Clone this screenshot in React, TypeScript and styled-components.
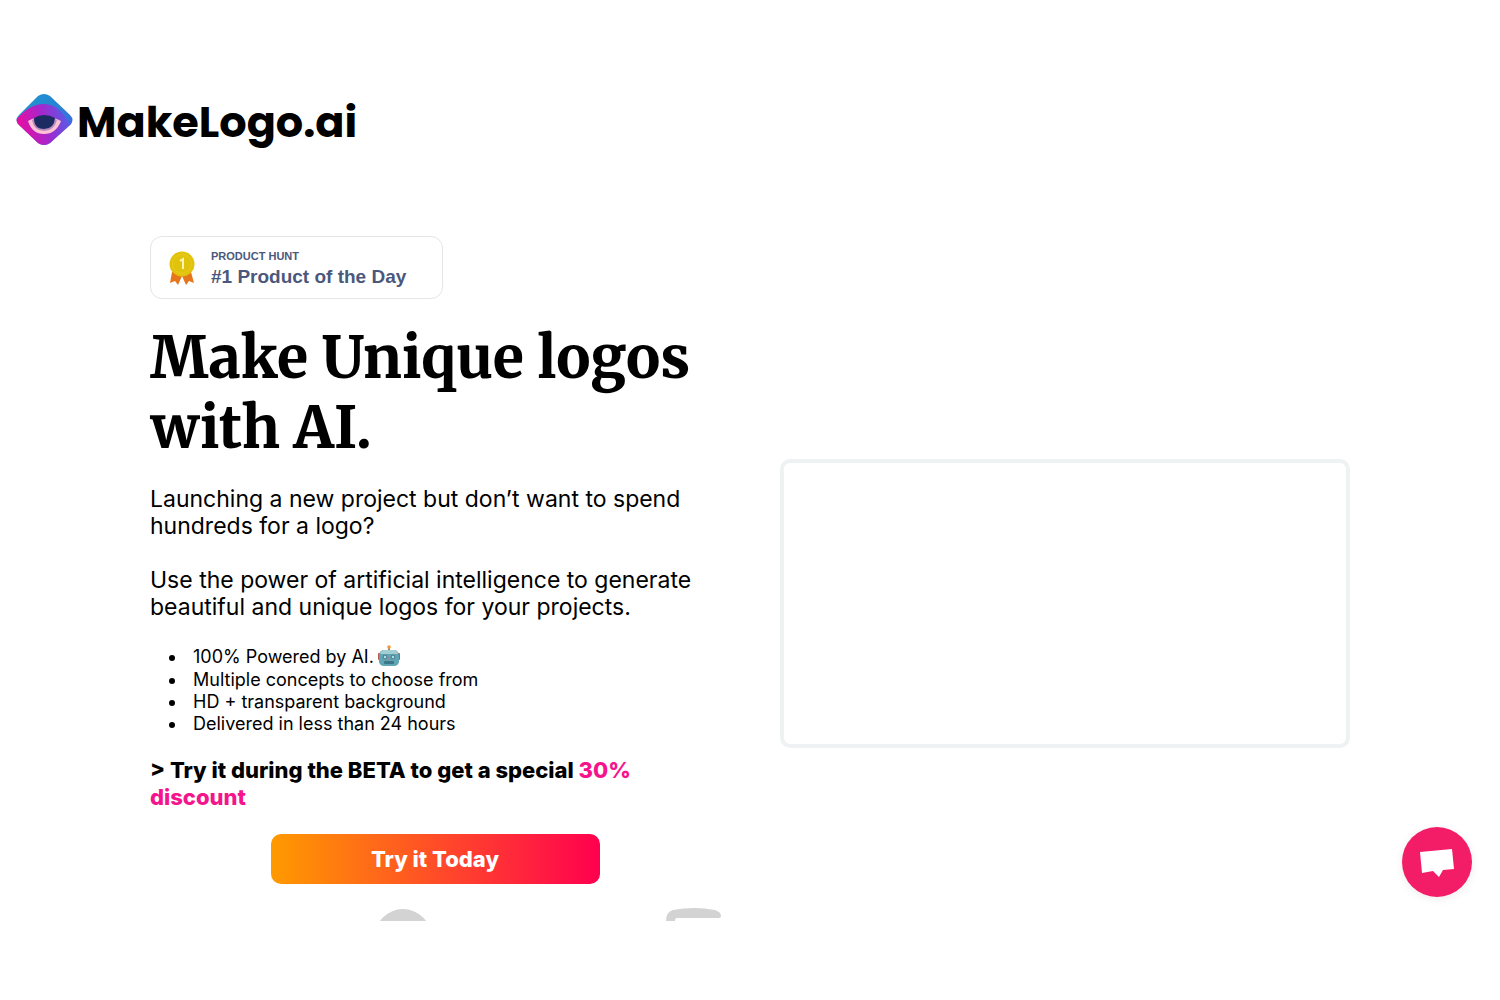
import React from "react";
import styled, { createGlobalStyle } from "styled-components";

const GlobalStyle = createGlobalStyle`
  *, *::before, *::after { box-sizing: border-box; }
  body {
    margin: 0;
    background: #fff;
    color: #000;
    font-family: Inter, "Liberation Sans", sans-serif;
  }
`;

const Page = styled.div`
  padding-top: 93px;
`;

const Header = styled.header`
  display: flex;
  padding: 0 16px;
`;

const Brand = styled.a`
  display: flex;
  align-items: flex-start;
  gap: 4px;
  height: 56px;
  color: #000;
  text-decoration: none;
  font-family: Poppins, Inter, sans-serif;
  font-size: 43px;
  font-weight: 700;
  line-height: 58px;
`;

const Hero = styled.main`
  display: grid;
  grid-template-columns: 1fr 1fr;
  gap: 60px;
  padding: 87px 10% 0;
`;

const Copy = styled.section`
  display: flex;
  flex-direction: column;
  align-items: flex-start;
`;

const Badge = styled.a`
  display: flex;
  align-items: center;
  gap: 16px;
  width: 293px;
  height: 63px;
  padding: 0 18px;
  border: 1px solid #e3e5e9;
  border-radius: 12px;
  color: #4b587c;
  text-decoration: none;
  font-family: "Liberation Sans", Arial, sans-serif;
  font-weight: 700;
`;

const BadgeText = styled.span`
  display: flex;
  flex-direction: column;
  padding-top: 2px;
`;

const BadgeLabel = styled.span`
  font-size: 11px;
  line-height: 16px;
`;

const BadgeTitle = styled.span`
  font-size: 19px;
  line-height: 26px;
`;

const Title = styled.h1`
  margin: 24px 0 23px;
  font-family: Merriweather, "DejaVu Serif", serif;
  font-size: 57px;
  font-weight: 800;
  line-height: 70px;
`;

const Paragraph = styled.p`
  margin: 0 0 27px;
  font-size: 23px;
  line-height: 27px;
`;

const Features = styled.ul`
  margin: -3px 0 22px;
  padding-left: 37px;
  font-size: 18px;
  line-height: 22px;
`;

const Feature = styled.li`
  padding-left: 6px;

  &:first-child {
    line-height: 24px;
  }

  svg {
    margin-left: 4px;
    vertical-align: -4px;
  }
`;

const Offer = styled.p`
  margin: 0;
  font-size: 22px;
  font-weight: 800;
  line-height: 27px;
`;

const Highlight = styled.span`
  color: #f5148c;
`;

const TryButton = styled.button`
  align-self: center;
  width: 329px;
  height: 50px;
  margin: 23px 0 24px;
  border: 0;
  border-radius: 10px;
  background: linear-gradient(90deg, #ff9a00, #ff004f);
  color: #fff;
  font-family: inherit;
  font-size: 22px;
  font-weight: 800;
  cursor: pointer;
`;

const Preview = styled.section`
  height: 289px;
  margin-top: 223px;
  border: 4px solid #eff2f3;
  border-radius: 10px;
`;

const Partners = styled.div`
  display: flex;
  gap: 235px;
  height: 13px;
  padding-left: 25%;
  overflow: hidden;
`;

const ChatButton = styled.button`
  position: fixed;
  right: 28px;
  bottom: 103px;
  display: flex;
  align-items: center;
  justify-content: center;
  width: 70px;
  height: 70px;
  padding: 0;
  border: 0;
  border-radius: 50%;
  background: #f21d66;
  box-shadow: 0 2px 10px rgba(0, 0, 0, 0.08);
  cursor: pointer;
`;

const LogoMark = () => (
  <svg width="57" height="54" viewBox="0 0 57 54" aria-hidden="true">
    <defs>
      <linearGradient id="mark-top" x1="0" y1="0" x2="1" y2="1">
        <stop offset="0" stopColor="#1b9bd0" />
        <stop offset="0.4" stopColor="#2487d2" />
        <stop offset="1" stopColor="#4a5de8" />
      </linearGradient>
      <linearGradient id="mark-body" x1="0" y1="0.6" x2="1" y2="0.4">
        <stop offset="0" stopColor="#f20a9c" />
        <stop offset="0.5" stopColor="#a626cc" />
        <stop offset="1" stopColor="#4d62ea" />
      </linearGradient>
      <clipPath id="mark-shape">
        <path d="M22 3Q28 -1 34 3L54 22Q59 27 54 32L34 50Q28 54 22 50L3 32Q-2 27 3 22Z" />
      </clipPath>
    </defs>
    <g clipPath="url(#mark-shape)">
      <rect width="57" height="54" fill="url(#mark-top)" />
      <path d="M0 27Q13 11 28 11Q41 11 50 25L57 34V54H0Z" fill="url(#mark-body)" />
    </g>
    <path d="M12 28Q28 19 45 28Q40 41 28 41T12 28Z" fill="#ffc2d4" />
    <path d="M16 27Q28 19 41 27Q38 38 28 38T16 27Z" fill="#b78abb" />
    <path d="M18 25Q28 19 39 25Q38 36 28 36T18 25Z" fill="#1c2c62" />
  </svg>
);

const Medal = () => (
  <svg width="26" height="34" viewBox="0 0 26 34" aria-hidden="true">
    <path d="M3 21L1 32L6 30L9 34L13 25L17 34L20 30L25 32L22 21Z" fill="#e5761b" />
    <circle cx="13" cy="13" r="12.5" fill="#e2c30b" />
    <circle cx="13" cy="13" r="9.5" fill="none" stroke="#e8ca24" />
    <path d="M11 10L14 8V18" fill="none" stroke="#fff5b4" strokeWidth="2" />
  </svg>
);

const Robot = () => (
  <svg width="22" height="22" viewBox="0 0 22 22" role="img" aria-label="Robot">
    <path d="M11 2V6" stroke="#9b8d69" strokeWidth="2" />
    <circle cx="11" cy="2" r="1.8" fill="#f29b38" />
    <rect x="0" y="8" width="3" height="7" rx="1" fill="#b95850" />
    <rect x="19" y="8" width="3" height="7" rx="1" fill="#b95850" />
    <path d="M6 5H16Q20 5 21 10V17Q20 21 16 21H6Q2 21 1 17V10Q2 5 6 5Z" fill="#5fa5b4" />
    <path d="M6 5H16Q19 5 20 9H2Q3 5 6 5Z" fill="#a1cdd3" />
    <circle cx="7" cy="12" r="2.4" fill="#5b7f94" />
    <circle cx="15" cy="12" r="2.4" fill="#5b7f94" />
    <circle cx="7" cy="12" r="1.2" fill="#a4e4ec" />
    <circle cx="15" cy="12" r="1.2" fill="#a4e4ec" />
    <path d="M11 12L10 15H12Z" fill="#bd7672" />
    <rect x="6" y="16" width="10" height="3" rx="1" fill="#3b7788" />
  </svg>
);

const features = [
  "Multiple concepts to choose from",
  "HD + transparent background",
  "Delivered in less than 24 hours",
];

export default function App() {
  return (
    <Page>
      <GlobalStyle />
      <Header>
        <Brand href="#">
          <LogoMark />
          MakeLogo.ai
        </Brand>
      </Header>
      <Hero>
        <Copy>
          <Badge href="#">
            <Medal />
            <BadgeText>
              <BadgeLabel>PRODUCT HUNT</BadgeLabel>
              <BadgeTitle>#1 Product of the Day</BadgeTitle>
            </BadgeText>
          </Badge>
          <Title>Make Unique logos with AI.</Title>
          <Paragraph>
            Launching a new project but don’t want to spend hundreds for a logo?
          </Paragraph>
          <Paragraph>
            Use the power of artificial intelligence to generate beautiful and unique logos for your projects.
          </Paragraph>
          <Features>
            <Feature>
              100% Powered by AI.
              <Robot />
            </Feature>
            {features.map((text) => (
              <Feature key={text}>{text}</Feature>
            ))}
          </Features>
          <Offer>
            &gt; Try it during the BETA to get a special <Highlight>30% discount</Highlight>
          </Offer>
          <TryButton type="button">Try it Today</TryButton>
        </Copy>
        <Preview aria-label="Preview" />
      </Hero>
      <Partners>
        <svg width="56" height="56" viewBox="0 0 56 56" aria-hidden="true">
          <circle cx="28" cy="29" r="28" fill="#d3d3d3" />
        </svg>
        <svg width="56" height="56" viewBox="0 0 56 56" aria-hidden="true">
          <path d="M0 56V13Q0 4 7 2Q28 -2 49 2Q55 4 55 8Q55 10 53 10H11Q9 10 9 13V56Z" fill="#d3d3d3" />
        </svg>
      </Partners>
      <ChatButton type="button" aria-label="Open chat">
        <svg width="36" height="32" viewBox="0 0 36 32" aria-hidden="true">
          <path d="M1 6L33 3L35 23L24 24L20 31L14 25L3 27Z" fill="#fff" />
        </svg>
      </ChatButton>
    </Page>
  );
}
